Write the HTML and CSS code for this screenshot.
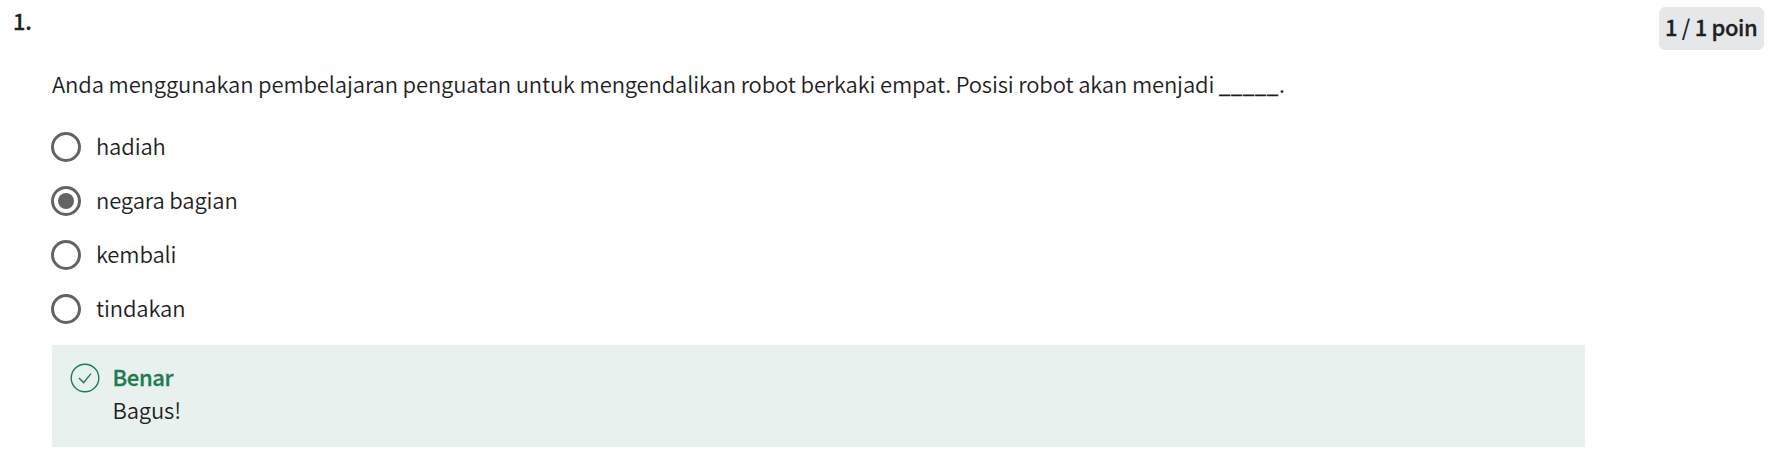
FILE: index.html
```html
<!DOCTYPE html>
<html lang="id">
<head>
<meta charset="utf-8">
<title>Kuis</title>
<link rel="stylesheet" href="styles.css">
</head>
<body>
<main class="question">
  <header class="question-head">
    <span class="number">1.</span>
    <span class="points">1 <span class="slash">/</span> 1 poin</span>
  </header>
  <div class="question-body">
    <p class="prompt">Anda menggunakan pembelajaran penguatan untuk mengendalikan robot berkaki empat. Posisi robot akan menjadi <span class="blank">_____</span>.</p>
    <div class="options">
      <div class="option"><span class="radio"></span><span class="label">hadiah</span></div>
      <div class="option"><span class="radio checked"></span><span class="label">negara bagian</span></div>
      <div class="option"><span class="radio"></span><span class="label">kembali</span></div>
      <div class="option"><span class="radio"></span><span class="label">tindakan</span></div>
    </div>
    <section class="feedback">
      <svg class="feedback-icon" viewBox="0 0 30 30"><circle cx="15" cy="15" r="13.8"/><path d="M9 15l4.6 4.6L21 10.6"/></svg>
      <div class="feedback-text">
        <strong class="feedback-title">Benar</strong>
        <span>Bagus!</span>
      </div>
    </section>
  </div>
</main>
</body>
</html>
```

FILE: styles.css
```css
* { box-sizing: border-box; }
body {
  margin: 0;
  background: #fff;
  color: #1f1f1f;
  font: 350 22px/33px "Noto Sans CJK SC DemiLight", "Noto Sans CJK SC", "Noto Sans", sans-serif;
  letter-spacing: -0.14px;
}
.question { padding: 7px 16px 0 13px; }
.question-head { display: flex; justify-content: space-between; align-items: flex-start; height: 60px; }
.number, .points, .feedback-title { font-family: "Noto Sans CJK SC Medium", "Noto Sans CJK SC", sans-serif; font-weight: 500; letter-spacing: -0.35px; -webkit-text-stroke: 0.3px currentColor; }
.number { margin-top: -3px; }
.points { width: 105px; background: #e5e7e8; border-radius: 6px; padding: 3px 6px; height: 43px; white-space: nowrap; }
.slash { font-weight: 400; -webkit-text-stroke: 0; }
.question-body { width: 1533px; margin-left: 39px; }
.prompt { margin: 0; height: 33px; white-space: nowrap; }
.blank { font-size: 20px; line-height: 1; letter-spacing: 0.85px; -webkit-text-stroke: 0.6px currentColor; }
.options { padding-top: 20px; }
.option { display: flex; align-items: center; gap: 15.5px; height: 54px; margin-left: -1.5px; }
.label { margin-top: -3px; }
.radio { width: 30px; height: 30px; border: 3px solid #636363; border-radius: 50%; display: grid; place-items: center; }
.checked::after { content: ""; width: 16px; height: 16px; border-radius: 50%; background: #636363; }
.feedback { display: flex; gap: 12.5px; height: 102px; margin-top: 9px; padding: 15px 18px; background: #e8f1ed; }
.feedback-icon { width: 30px; height: 30px; margin-top: 3px; fill: none; stroke: #1d7c50; stroke-width: 1.4; }
.feedback-text { display: flex; flex-direction: column; }
.feedback-title { color: #1d7c50; }
```
